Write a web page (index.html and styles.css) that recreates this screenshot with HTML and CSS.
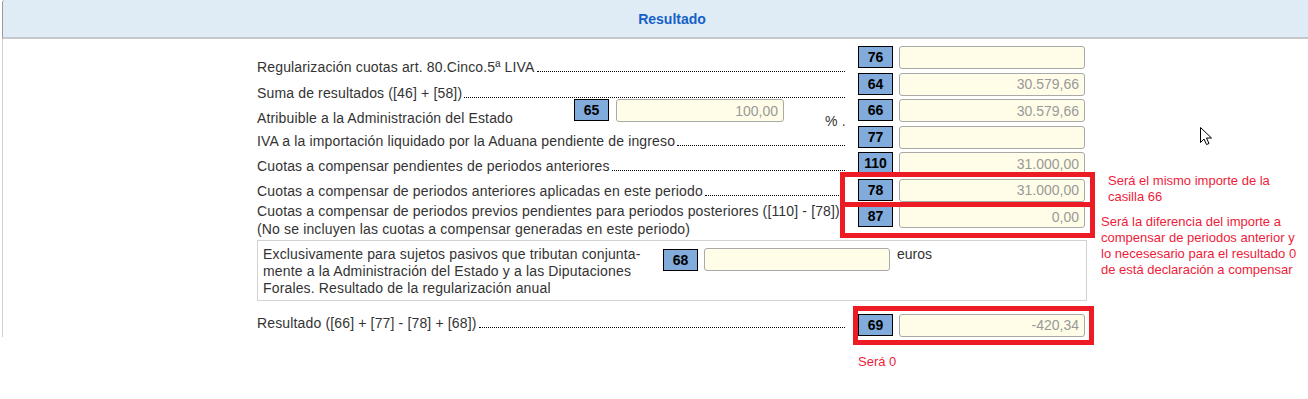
FILE: index.html
```html
<!DOCTYPE html>
<html lang="es">
<head>
  <meta charset="UTF-8">
  <title>Resultado</title>
  <link rel="stylesheet" href="styles.css">
</head>
<body>
  <div class="panel">
    <div class="panel-head">Resultado</div>
    <div class="panel-body">
      <div class="row">
        <div class="label pt13"><span>Regularización cuotas art. 80.Cinco.5ª LIVA</span><i class="dots"></i></div>
        <span class="casilla">76</span>
        <input class="amount" type="text" value="" readonly>
      </div>
      <div class="row">
        <div class="label pt12"><span>Suma de resultados ([46] + [58])</span><i class="dots"></i></div>
        <span class="casilla">64</span>
        <input class="amount" type="text" value="30.579,66" readonly>
      </div>
      <div class="row">
        <div class="label split">
          <span class="split-text">Atribuible a la Administración del Estado</span>
          <span class="casilla">65</span>
          <input class="amount pct-input" type="text" value="100,00" readonly>
          <span class="pct">% .</span>
        </div>
        <span class="casilla">66</span>
        <input class="amount" type="text" value="30.579,66" readonly>
      </div>
      <div class="row">
        <div class="label pt7"><span>IVA a la importación liquidado por la Aduana pendiente de ingreso</span><i class="dots"></i></div>
        <span class="casilla">77</span>
        <input class="amount" type="text" value="" readonly>
      </div>
      <div class="row">
        <div class="label pt6"><span>Cuotas a compensar pendientes de periodos anteriores</span><i class="dots"></i></div>
        <span class="casilla">110</span>
        <input class="amount" type="text" value="31.000,00" readonly>
      </div>
      <div class="row">
        <div class="label pt4"><span>Cuotas a compensar de periodos anteriores aplicadas en este periodo</span><i class="dots"></i></div>
        <span class="casilla">78</span>
        <input class="amount" type="text" value="31.000,00" readonly>
      </div>
      <div class="row">
        <div class="label two-lines">Cuotas a compensar de periodos previos pendientes para periodos posteriores ([110] - [78])<br>(No se incluyen las cuotas a compensar generadas en este periodo)</div>
        <span class="casilla">87</span>
        <input class="amount" type="text" value="0,00" readonly>
      </div>

      <div class="foral">
        <div class="foral-text">Exclusivamente para sujetos pasivos que tributan conjunta-mente a la Administración del Estado y a las Diputaciones Forales. Resultado de la regularización anual</div>
        <span class="casilla">68</span>
        <input class="amount foral-input" type="text" value="" readonly>
        <span class="euros">euros</span>
      </div>

      <div class="row last">
        <div class="label pt1"><span>Resultado ([66] + [77] - [78] + [68])</span><i class="dots"></i></div>
        <span class="casilla">69</span>
        <input class="amount" type="text" value="-420,34" readonly>
      </div>
    </div>
  </div>

  <!-- anotaciones -->
  <div class="mark mark-78"></div>
  <div class="mark mark-87"></div>
  <div class="mark mark-69"></div>
  <div class="note note-78">Será el mismo importe de la<br>casilla 66</div>
  <div class="note note-87">Será la diferencia del importe a<br>compensar de periodos anterior y<br>lo necesesario para el resultado 0<br>de está declaración a compensar</div>
  <div class="note note-69">Será 0</div>

  <svg class="cursor" width="14" height="21" viewBox="0 0 14 21">
    <path d="M1.5 1.5 L1.5 16.5 L5 13 L7.5 18.5 L10 17.5 L7.5 12 L12.5 12 Z" fill="#fff" stroke="#000" stroke-width="1" stroke-linejoin="miter"/>
  </svg>
</body>
</html>
```

FILE: styles.css
```css
body {
  margin: 0;
  font-family: 'Liberation Sans', Arial, sans-serif;
  font-size: 14px;
  color: #333;
  background: #fff;
  width: 1308px;
  height: 399px;
  overflow: hidden;
  position: relative;
}
.panel {
  margin-left: 2px;
}
.panel-head {
  height: 37px;
  line-height: 38px;
  padding-left: 33px;
  text-align: center;
  background: #e0ecf5;
  border-left: 1px solid #9a9a9a;
  border-bottom: 2px solid #c6c9cc;
  border-top-left-radius: 3px;
  color: #1560c8;
  font-weight: bold;
  font-size: 14px;
}
.panel-body {
  border-left: 1px solid #cfcfcf;
  padding: 7px 0 0 254px;
}
.row {
  display: flex;
  align-items: flex-start;
  height: 26.5px;
}
.row.last {
  height: 23px;
  margin-top: 13px;
}
.label {
  display: flex;
  width: 588px;
  line-height: 16px;
  letter-spacing: 0.15px;
  white-space: nowrap;
  flex: none;
}
.label .dots {
  flex: 1;
  align-self: flex-end;
  height: 0;
  margin: 0 0 3px 2px;
  border-bottom: 1px dotted #000;
}
.pt13 { padding-top: 13px; }
.pt12 { padding-top: 12px; }
.pt7 { padding-top: 7px; }
.pt6 { padding-top: 6px; }
.pt4 { padding-top: 4px; }
.pt1 { padding-top: 1px; }
.label.two-lines {
  display: block;
  line-height: 18px;
  margin-top: -3px;
}
.label.split {
  align-items: flex-start;
}
.split-text {
  flex: none;
  width: 317px;
  margin-top: 11px;
}
.pct {
  margin: 14px 0 0 41px;
  line-height: 16px;
}
.casilla {
  box-sizing: border-box;
  width: 35px;
  height: 22px;
  margin-left: 13px;
  background: #80abdb;
  border: 1px solid #000;
  color: #000;
  font-weight: bold;
  font-size: 14px;
  line-height: 20px;
  letter-spacing: 0;
  text-align: center;
  flex: none;
}
.label .casilla {
  margin-left: 0;
}
.amount {
  box-sizing: border-box;
  width: 186px;
  height: 23px;
  margin: 0 0 0 6px;
  padding: 0 5px;
  background: #fffde8;
  border: 1px solid #a9a9a9;
  border-radius: 3px;
  color: #999;
  font-family: 'Liberation Sans', Arial, sans-serif;
  font-size: 14px;
  letter-spacing: 0;
  text-align: right;
  outline: none;
  flex: none;
}
.amount.pct-input {
  width: 168px;
  margin-left: 7px;
}
.foral {
  box-sizing: border-box;
  display: flex;
  align-items: flex-start;
  width: 830px;
  height: 61px;
  margin-top: 8px;
  border: 1px solid #d2d2d2;
}
.foral-text {
  flex: none;
  width: 395px;
  padding: 5px 0 0 5px;
  line-height: 17px;
  letter-spacing: 0.15px;
}
.foral .casilla {
  margin: 8px 0 0 5px;
}
.foral-input {
  margin-top: 7px;
}
.euros {
  margin: 5px 0 0 7px;
  line-height: 16px;
}

/* anotaciones sobre la captura */
.mark {
  position: absolute;
  box-sizing: border-box;
  border: 5px solid #ed1c24;
}
.mark-78 { left: 840px; top: 172px; width: 255px; height: 35px; }
.mark-87 { left: 840px; top: 202px; width: 255px; height: 36px; }
.mark-69 { left: 853px; top: 306px; width: 241px; height: 39px; }
.note {
  position: absolute;
  color: #ee1c3a;
  font-size: 13px;
  line-height: 16px;
  white-space: nowrap;
}
.note-78 { left: 1108px; top: 173px; }
.note-87 { left: 1101px; top: 214px; }
.note-69 { left: 858px; top: 354px; }
.cursor {
  position: absolute;
  left: 1199px;
  top: 126px;
}
```
